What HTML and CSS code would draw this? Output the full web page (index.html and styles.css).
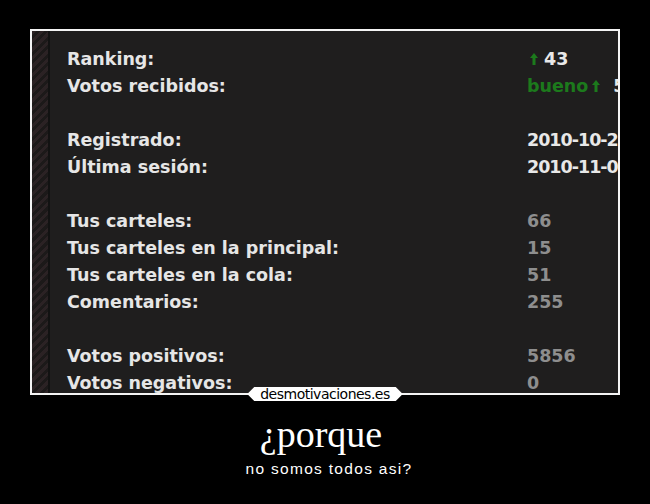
FILE: index.html
```html
<!DOCTYPE html>
<html lang="es">
<head>
<meta charset="utf-8">
<title>¿porque</title>
<link rel="stylesheet" href="styles.css">
</head>
<body>
<div class="poster">
  <div class="frame">
    <div class="strip"></div>
    <div class="divider"></div>
    <div class="stats">
      <div class="label">Ranking:</div>
      <div class="value white"><svg class="arrow" viewBox="0 0 8 12"><path d="M4 0 L8 5 L5.5 5 L5.5 12 L2.5 12 L2.5 5 L0 5 Z"/></svg> 43</div>
      <div class="label">Votos recibidos:</div>
      <div class="value green">bueno<svg class="arrow" viewBox="0 0 8 12"><path d="M4 0 L8 5 L5.5 5 L5.5 12 L2.5 12 L2.5 5 L0 5 Z"/></svg> <span class="white">5</span></div>
      <div class="gap"></div>
      <div class="label">Registrado:</div>
      <div class="value white date">2010-10-29</div>
      <div class="label">Última sesión:</div>
      <div class="value white date">2010-11-07</div>
      <div class="gap"></div>
      <div class="label">Tus carteles:</div>
      <div class="value grey">66</div>
      <div class="label">Tus carteles en la principal:</div>
      <div class="value grey">15</div>
      <div class="label">Tus carteles en la cola:</div>
      <div class="value grey">51</div>
      <div class="label">Comentarios:</div>
      <div class="value grey">255</div>
      <div class="gap"></div>
      <div class="label">Votos positivos:</div>
      <div class="value grey">5856</div>
      <div class="label">Votos negativos:</div>
      <div class="value grey">0</div>
    </div>
  </div>
  <div class="logo">desmotivaciones.es</div>
  <h1 class="title">¿porque</h1>
  <p class="subtitle">no somos todos asi?</p>
</div>
</body>
</html>
```

FILE: styles.css
```css
html, body {
  margin: 0;
  padding: 0;
  background: #000;
}
.poster {
  width: 650px;
  height: 504px;
  padding-top: 29px;
  box-sizing: border-box;
  display: flex;
  flex-direction: column;
  align-items: center;
}
.frame {
  width: 590px;
  height: 366px;
  box-sizing: border-box;
  border: 2px solid #f4f4f4;
  background: #1f1e1e;
  display: flex;
  overflow: hidden;
}
.strip {
  width: 16px;
  flex: none;
  background: repeating-linear-gradient(135deg, #2b2224 0 3px, #1c1919 3px 6px);
}
.divider {
  width: 2px;
  flex: none;
  background: #121212;
}
.stats {
  flex: 1;
  display: grid;
  grid-template-columns: 460px 200px;
  grid-auto-rows: 27px;
  align-items: center;
  padding: 14px 0 0 17px;
  font-family: "DejaVu Sans", Verdana, sans-serif;
  font-weight: bold;
  font-size: 17.5px;
  overflow: hidden;
}
.label {
  color: #e6e6e6;
  white-space: nowrap;
}
.value {
  white-space: nowrap;
  display: flex;
  align-items: center;
  gap: 0;
}
.date {
  letter-spacing: -1px;
}
.gap {
  grid-column: 1 / span 2;
}
.white { color: #e8e8e8; }
.green { color: #1c7a1c; }
.grey { color: #8e8e8e; }
.arrow {
  width: 8px;
  height: 12px;
  fill: #1c7a1c;
  margin: 0 6px 0 3px;
}
.green .arrow { margin: 0 13px 0 4px; }
.logo {
  margin-top: -8px;
  height: 14px;
  padding: 0 13px;
  background: #fff;
  color: #000;
  font-family: "DejaVu Sans", sans-serif;
  font-size: 14px;
  line-height: 14px;
  letter-spacing: -0.5px;
  clip-path: polygon(7px 0, calc(100% - 7px) 0, 100% 50%, calc(100% - 7px) 100%, 7px 100%, 0 50%);
}
.title {
  margin: 13px 0 0 -8px;
  font-family: "Liberation Serif", "Times New Roman", serif;
  font-weight: normal;
  font-size: 38px;
  line-height: 40px;
  color: #fff;
}
.subtitle {
  margin: 6px 0 0 8px;
  font-family: "Liberation Sans", Arial, sans-serif;
  font-size: 15.5px;
  letter-spacing: 1.3px;
  color: #fff;
}
```
